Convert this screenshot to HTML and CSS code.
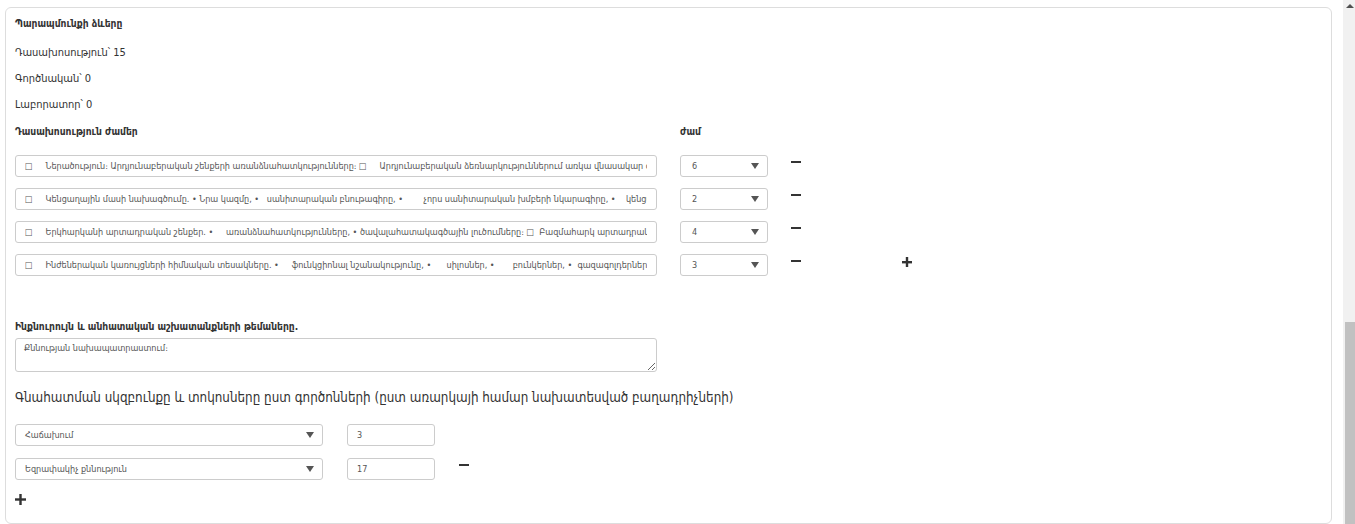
FILE: index.html
```html
<!DOCTYPE html>
<html lang="hy">
  <head>
    <meta charset="UTF-8" />
    <meta name="viewport" content="width=device-width, initial-scale=1.0" />
    <title>Առարկայի ծրագիր</title>
    <link rel="stylesheet" href="styles.css">
  </head>
  <body>
    <div class="viewport">
      <main class="page">
        <section class="card">
          <h4 class="title">Պարապմունքի ձևերը</h4>
          <div class="stats">
            <p>Դասախոսություն՝ 15</p>
            <p>Գործնական՝ 0</p>
            <p>Լաբորատոր՝ 0</p>
          </div>

          <div class="hours-head">
            <h4 class="title">Դասախոսություն ժամեր</h4>
            <h4 class="title">ժամ</h4>
          </div>

          <div class="hours">
            <div class="hours-row">
              <input class="field" type="text" value="□     Ներածություն։ Արդյունաբերական շենքերի առանձնահատկությունները։ □     Արդյունաբերական ձեռնարկություններում առկա վնասակար գործոնները">
              <div class="field select"><span>6</span><svg class="caret" width="8" height="6" viewBox="0 0 8 6"><path d="M0 0h8L4 6z"/></svg></div>
              <svg class="icon" width="10" height="14" viewBox="0 0 10 14"><rect x="0" y="6" width="10" height="2"/></svg>
            </div>
            <div class="hours-row">
              <input class="field" type="text" value="□     Կենցաղային մասի նախագծումը. • Նրա կազմը, •   սանիտարական բնութագիրը, •        չորս սանիտարական խմբերի նկարագիրը, •    կենցաղային սենքերի տեղադրումը">
              <div class="field select"><span>2</span><svg class="caret" width="8" height="6" viewBox="0 0 8 6"><path d="M0 0h8L4 6z"/></svg></div>
              <svg class="icon" width="10" height="14" viewBox="0 0 10 14"><rect x="0" y="6" width="10" height="2"/></svg>
            </div>
            <div class="hours-row">
              <input class="field" type="text" value="□     Երկհարկանի արտադրական շենքեր. •     առանձնահատկությունները, • ծավալահատակագծային լուծումները։ □  Բազմահարկ արտադրական շենքեր">
              <div class="field select"><span>4</span><svg class="caret" width="8" height="6" viewBox="0 0 8 6"><path d="M0 0h8L4 6z"/></svg></div>
              <svg class="icon" width="10" height="14" viewBox="0 0 10 14"><rect x="0" y="6" width="10" height="2"/></svg>
            </div>
            <div class="hours-row">
              <input class="field" type="text" value="□     Ինժեներական կառույցների հիմնական տեսակները. •     ֆունկցիոնալ նշանակությունը, •      սիլոսներ, •       բունկերներ, •  գազագոլդերներ">
              <div class="field select"><span>3</span><svg class="caret" width="8" height="6" viewBox="0 0 8 6"><path d="M0 0h8L4 6z"/></svg></div>
              <svg class="icon" width="10" height="14" viewBox="0 0 10 14"><rect x="0" y="6" width="10" height="2"/></svg>
              <svg class="icon add-row" width="10" height="14" viewBox="0 0 10 14"><rect x="0" y="7" width="10" height="2.4"/><rect x="3.8" y="3" width="2.4" height="10"/></svg>
            </div>
          </div>

          <h4 class="title topics-label">Ինքնուրույն և անհատական աշխատանքների թեմաները.</h4>
          <textarea class="field topics">Քննության նախապատրաստում։</textarea>

          <h3 class="grading-title">Գնահատման սկզբունքը և տոկոսները ըստ գործոնների (ըստ առարկայի համար նախատեսված բաղադրիչների)</h3>

          <div class="grading">
            <div class="grading-row">
              <div class="field select"><span>Հաճախում</span><svg class="caret" width="8" height="6" viewBox="0 0 8 6"><path d="M0 0h8L4 6z"/></svg></div>
              <input class="field" type="text" value="3">
            </div>
            <div class="grading-row">
              <div class="field select"><span>Եզրափակիչ քննություն</span><svg class="caret" width="8" height="6" viewBox="0 0 8 6"><path d="M0 0h8L4 6z"/></svg></div>
              <input class="field" type="text" value="17">
              <svg class="icon" width="10" height="14" viewBox="0 0 10 14"><rect x="0" y="6" width="10" height="2"/></svg>
            </div>
          </div>
          <svg class="icon add-grade" width="11" height="11" viewBox="0 0 11 11"><rect x="0" y="4.3" width="11" height="2.4"/><rect x="4.3" y="0" width="2.4" height="11"/></svg>
        </section>
      </main>

      <div class="scrollbar">
        <svg class="scroll-arrow" width="8" height="4" viewBox="0 0 8 4"><path d="M4 0L8 4H0z"/></svg>
        <span class="scroll-track"></span>
        <span class="scroll-thumb"></span>
      </div>
    </div>
  </body>
</html>
```

FILE: styles.css
```css
html,
body {
  margin: 0;
  height: 100%;
}

body {
  font-family: "DejaVu Sans", sans-serif;
  font-stretch: condensed;
  color: #333;
  background: #fff;
  overflow: hidden;
}

.viewport {
  display: flex;
  height: 100vh;
}

.page {
  flex: 1;
  padding: 7px 11px 0 5px;
}

.card {
  border: 1px solid #ddd;
  border-radius: 6px;
  padding: 8px 9px 18px;
}

.title {
  margin: 0;
  font-size: 10.2px;
  line-height: 16px;
  font-weight: bold;
  color: #333;
}

.stats {
  margin-top: 8px;
  font-size: 11px;
}

.stats p {
  margin: 0;
  line-height: 26px;
}

.hours-head {
  display: grid;
  grid-template-columns: 642px 88px;
  column-gap: 23px;
  margin-top: 6px;
}

.hours {
  margin-top: 15px;
  display: flex;
  flex-direction: column;
  gap: 11px;
}

.hours-row {
  display: grid;
  grid-template-columns: 642px 88px 10px auto;
  column-gap: 23px;
  align-items: start;
}

.field {
  box-sizing: border-box;
  height: 22px;
  margin: 0;
  border: 1px solid #ccc;
  border-radius: 3px;
  background: #fff;
  font-family: inherit;
  font-stretch: condensed;
  font-size: 9px;
  color: #555;
  padding: 0 9px;
  outline: none;
  white-space: pre;
}

.select {
  display: flex;
  align-items: center;
  justify-content: space-between;
  padding: 0 8px 0 11px;
}

.caret {
  fill: #555;
}

.icon {
  display: block;
  fill: #333;
}

.add-row {
  margin-left: 78px;
}

.topics-label {
  margin-top: 43px;
}

.topics {
  display: block;
  width: 642px;
  height: 34px;
  margin-top: 3px;
  padding: 4px 8px;
  resize: vertical;
  white-space: normal;
}

.grading-title {
  margin: 16px 0 0;
  font-size: 13.3px;
  line-height: 20px;
  font-weight: normal;
  color: #333;
}

.grading {
  margin-top: 16px;
  display: flex;
  flex-direction: column;
  gap: 12px;
}

.grading-row {
  display: grid;
  grid-template-columns: 308px 88px 10px;
  column-gap: 24px;
  align-items: start;
}

.grading-row .select {
  padding-left: 9px;
}

.add-grade {
  margin: 14px 0 0 0;
}

/* fake page scrollbar, parked at the bottom */
.scrollbar {
  width: 12px;
  background: #f1f1f1;
  display: flex;
  flex-direction: column;
}

.scroll-arrow {
  display: block;
  margin: 4px 0 0 3px;
  fill: #505050;
}

.scroll-track {
  flex: 1;
}

.scroll-thumb {
  height: 202px;
  margin-left: 2px;
  background: #c1c1c1;
}
```
